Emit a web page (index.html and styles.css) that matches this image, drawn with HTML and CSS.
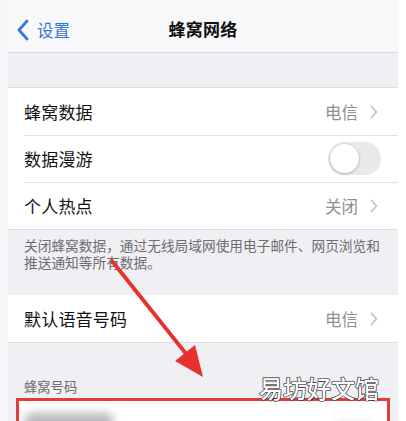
FILE: index.html
```html
<!DOCTYPE html>
<html lang="zh-CN">
<head>
<meta charset="utf-8">
<title>蜂窝网络</title>
<link rel="stylesheet" href="styles.css">
</head>
<body>
<div class="page">
  <div class="edge"></div>
  <main class="screen">
    <header class="nav">
      <a class="back">
        <svg class="back-chevron" viewBox="0 0 12 22" width="12" height="22"><path d="M10 2 L2 11 L10 20" fill="none" stroke="currentColor" stroke-width="2.8" stroke-linecap="round" stroke-linejoin="round"/></svg>
        <span>设置</span>
      </a>
      <h1 class="nav-title">蜂窝网络</h1>
    </header>

    <div class="spacer"></div>

    <section class="group">
      <div class="row">
        <span class="label">蜂窝数据</span>
        <span class="value">电信</span>
        <svg class="chev" viewBox="0 0 8 14" width="8" height="14"><path d="M1.5 1.5 L6.5 7 L1.5 12.5" fill="none" stroke="currentColor" stroke-width="1.8" stroke-linecap="round" stroke-linejoin="round"/></svg>
      </div>
      <div class="row">
        <span class="label">数据漫游</span>
        <span class="switch"><span class="knob"></span></span>
      </div>
      <div class="row">
        <span class="label">个人热点</span>
        <span class="value">关闭</span>
        <svg class="chev" viewBox="0 0 8 14" width="8" height="14"><path d="M1.5 1.5 L6.5 7 L1.5 12.5" fill="none" stroke="currentColor" stroke-width="1.8" stroke-linecap="round" stroke-linejoin="round"/></svg>
      </div>
    </section>

    <p class="footnote">关闭蜂窝数据，通过无线局域网使用电子邮件、网页浏览和推送通知等所有数据。</p>

    <section class="group">
      <div class="row">
        <span class="label">默认语音号码</span>
        <span class="value">电信</span>
        <svg class="chev" viewBox="0 0 8 14" width="8" height="14"><path d="M1.5 1.5 L6.5 7 L1.5 12.5" fill="none" stroke="currentColor" stroke-width="1.8" stroke-linecap="round" stroke-linejoin="round"/></svg>
      </div>
    </section>

    <p class="section-title">蜂窝号码</p>

    <section class="group marked">
      <div class="row">
        <span class="redact redact-number"></span>
        <span class="redact redact-carrier"></span>
      </div>
    </section>
  </main>
</div>

<svg class="pointer" width="406" height="421" viewBox="0 0 406 421">
  <line x1="112" y1="261" x2="187" y2="355" stroke="#e8312e" stroke-width="3.8" stroke-linecap="round"/>
  <polygon points="203,377 195,345 175,361" fill="#e8312e"/>
</svg>

<div class="watermark">易坊好文馆</div>
</body>
</html>
```

FILE: styles.css
```css
* {
  box-sizing: border-box;
}

html, body {
  margin: 0;
  padding: 0;
  background: #ffffff;
}

body {
  font-family: "Noto Sans CJK SC", "Noto Sans", sans-serif;
  color: #111;
  width: 406px;
  height: 421px;
  overflow: hidden;
  position: relative;
}

.page {
  display: flex;
  height: 421px;
  overflow: hidden;
}

.edge {
  width: 8px;
  flex: none;
  background: #f6f6f8;
}

.screen {
  width: 390px;
  flex: none;
  background: #efeff4;
  display: flex;
  flex-direction: column;
  overflow: hidden;
}

/* navigation bar */
.nav {
  height: 53px;
  flex: none;
  background: #f8f8fa;
  border-bottom: 1px solid #d9d9de;
  display: flex;
  align-items: center;
  justify-content: center;
  position: relative;
}

.back {
  position: absolute;
  left: 9px;
  top: 18px;
  display: flex;
  align-items: center;
  gap: 8px;
  color: #3478d8;
  font-size: 16.5px;
  line-height: 24px;
}

.back-chevron {
  display: block;
}

.nav-title {
  margin: 4px 0 0;
  font-size: 17px;
  font-weight: 700;
  letter-spacing: 0.3px;
  color: #111;
}

.spacer {
  height: 35px;
  flex: none;
  border-bottom: 1px solid #dcdce1;
}

/* grouped cells */
.group {
  background: #ffffff;
  flex: none;
}

.row {
  height: 47px;
  display: flex;
  align-items: center;
  padding: 0 20px 0 16px;
  position: relative;
}

.row + .row::before {
  content: "";
  position: absolute;
  left: 16px;
  right: 0;
  top: 0;
  border-top: 1px solid #e3e3e7;
}

.label {
  flex: 1;
  font-size: 17px;
  letter-spacing: 0.2px;
}

.value {
  font-size: 16.5px;
  color: #8e8e93;
  margin-right: 12px;
}

.chev {
  color: #c4c4c9;
  display: block;
}

.switch {
  width: 53px;
  height: 33px;
  border-radius: 17px;
  background: #e9e9ec;
  position: relative;
  margin-right: -3px;
}

.knob {
  position: absolute;
  left: 2px;
  top: 2px;
  width: 29px;
  height: 29px;
  border-radius: 50%;
  background: #fff;
  box-shadow: 0 1px 3px rgba(0, 0, 0, 0.25), 0 0 0 0.5px rgba(0, 0, 0, 0.06);
}

.footnote {
  margin: 0;
  padding: 7px 8px 24px 16px;
  font-size: 13.7px;
  line-height: 17px;
  color: #6d6d72;
  border-top: 1px solid #dcdce1;
  flex: none;
}

.section-title {
  margin: 0;
  padding: 35px 16px 3px;
  font-size: 13.3px;
  line-height: 17px;
  color: #6d6d72;
  border-top: 1px solid #dcdce1;
  flex: none;
}

.group.marked {
  margin: 0 8px;
  border: 3px solid #e23c3a;
  border-bottom: none;
}

.group.marked .row {
  padding: 0 12px 0 6px;
  height: 50px;
  align-items: flex-start;
  justify-content: space-between;
}

/* blurred-out phone number and carrier */
.redact {
  display: block;
  background: #b8b8bc;
  border-radius: 6px;
  filter: blur(5px);
}

.redact-number {
  width: 88px;
  height: 18px;
  margin-top: 12px;
}

.redact-carrier {
  width: 40px;
  height: 10px;
  margin-top: 22px;
  background: #cfcfd3;
  filter: blur(3px);
}

/* annotation overlays */
.pointer {
  position: absolute;
  left: 0;
  top: 0;
  pointer-events: none;
}

.watermark {
  position: absolute;
  left: 259px;
  top: 372px;
  font-size: 24px;
  line-height: 32px;
  font-weight: 500;
  color: #ffffff;
  -webkit-text-stroke: 1.2px #2a2a2a;
  paint-order: stroke fill;
  text-shadow: 0 0 1px #222;
}
```
